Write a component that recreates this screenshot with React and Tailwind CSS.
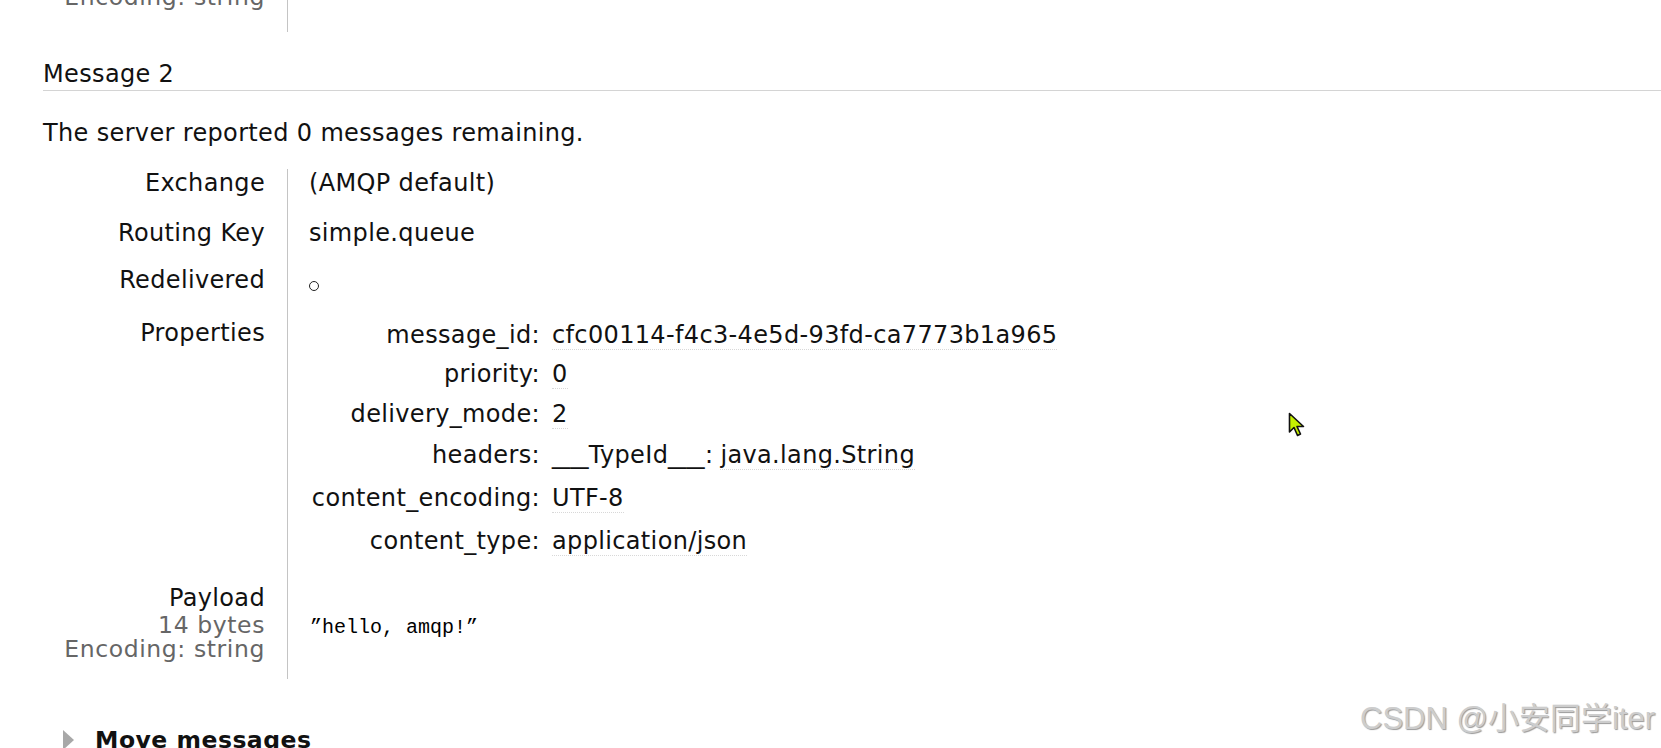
import React from "react";

// Message 2 detail block from the RabbitMQ "Get messages" panel
const ROWS = [
  { label: "Exchange", value: "(AMQP default)", h: "h-[50px]" },
  { label: "Routing Key", value: "simple.queue", h: "h-[47px]" },
  { label: "Redelivered", value: "circle", h: "h-[53px]" },
];

const PROPS = [
  { key: "message_id", value: "cfc00114-f4c3-4e5d-93fd-ca7773b1a965", h: "h-[39px]" },
  { key: "priority", value: "0", h: "h-[40px]" },
  { key: "delivery_mode", value: "2", h: "h-[41px]" },
  { key: "headers", value: "headers", h: "h-[43px]" },
  { key: "content_encoding", value: "UTF-8", h: "h-[43px]" },
  { key: "content_type", value: "application/json", h: "h-[57px]" },
];

function Dotted({ children }) {
  return <span className="border-b border-dotted border-[#d8d8d8]">{children}</span>;
}

// the reference font draws "__" wider than DejaVu does
function WideUnderscores() {
  return <span className="mr-[12px] inline-block origin-left scale-x-150">__</span>;
}

function Cursor() {
  return (
    <svg width="18" height="27" viewBox="0 0 18 27" className="absolute left-[1288px] top-[412px]">
      <path
        d="M1.5 1.5 L1.5 20 L6 15.5 L9.5 23.5 L12.5 22 L9 14.5 L15.5 14.5 Z"
        fill="#c6f000"
        stroke="#111"
        strokeWidth="1.6"
        strokeLinejoin="round"
      />
    </svg>
  );
}

export default function App() {
  return (
    <div className="relative h-[748px] w-full overflow-hidden bg-white font-['DejaVu_Sans','Verdana',sans-serif] text-[24px] leading-[29px] tracking-[0.35px] text-[#111]">
      <div className="pl-[43px]">
        {/* tail of the previous message */}
        <div className="flex h-[32px] overflow-hidden">
          <div className="w-[244px] pr-[22px] text-right">
            <div className="mt-[-15px] text-[23.5px] leading-[24px] tracking-[0.6px] text-[#666]">Encoding: string</div>
          </div>
          <div className="border-l border-[#c4c4c4]" />
        </div>

        <h2 className="mt-[28px] border-b border-[#d4d4d4] pb-[1px] font-normal">Message 2</h2>

        <p className="mt-[28px]">The server reported 0 messages remaining.</p>

        <div className="mt-[21px]">
          {ROWS.map((row) => (
            <div key={row.label} className={`flex ${row.h}`}>
              <div className="w-[244px] shrink-0 pr-[22px] text-right">{row.label}</div>
              <div className="flex-1 border-l border-[#c4c4c4] pl-[21px]">
                {row.value === "circle" ? (
                  <span className="mt-[15px] inline-block h-[10px] w-[10px] rounded-full border-[1.5px] border-[#222]" />
                ) : (
                  row.value
                )}
              </div>
            </div>
          ))}

          <div className="flex">
            <div className="w-[244px] shrink-0 pr-[22px] text-right">Properties</div>
            <div className="flex-1 border-l border-[#c4c4c4] pl-[21px] pt-[2px]">
              {PROPS.map((p) => (
                <div key={p.key} className={`flex ${p.h}`}>
                  <div className="w-[231px] shrink-0 text-right">{p.key}:</div>
                  <div className="ml-[12px]">
                    {p.value === "headers" ? (
                      <span className="flex">
                        <span>
                          <WideUnderscores />TypeId<WideUnderscores />:
                        </span>
                        <span className="ml-[7px]">
                          <Dotted>java.lang.String</Dotted>
                        </span>
                      </span>
                    ) : (
                      <Dotted>{p.value}</Dotted>
                    )}
                  </div>
                </div>
              ))}
            </div>
          </div>

          <div className="flex h-[95px]">
            <div className="w-[244px] shrink-0 pr-[22px] text-right">
              <div>Payload</div>
              <div className="text-[23.5px] leading-[24px] tracking-[0.6px] text-[#666]">14 bytes</div>
              <div className="text-[23.5px] leading-[24px] tracking-[0.6px] text-[#666]">Encoding: string</div>
            </div>
            <div className="flex-1 border-l border-[#c4c4c4] pl-[22px] pt-[32px]">
              <pre className="font-['Liberation_Mono',monospace] text-[20px] leading-[24px] tracking-normal text-black">”hello, amqp!”</pre>
            </div>
          </div>
        </div>

        <div className="mt-[48px] flex items-start">
          <span className="ml-[20px] mt-[3px] h-0 w-0 border-y-[10px] border-l-[11px] border-y-transparent border-l-[#a8a8a8]" />
          <h3 className="ml-[21px] text-[23.5px] font-bold leading-[27px] tracking-[0.5px]">Move messages</h3>
        </div>
      </div>

      <Cursor />

      <div className="absolute right-[6px] top-[703px] font-['Liberation_Sans','Noto_Sans_CJK_SC',sans-serif] text-[31px] leading-[31px] tracking-normal text-[#cdcdcd] [text-shadow:1px_1px_1px_#9a9a9a]">
        CSDN @小安同学iter
      </div>
    </div>
  );
}
